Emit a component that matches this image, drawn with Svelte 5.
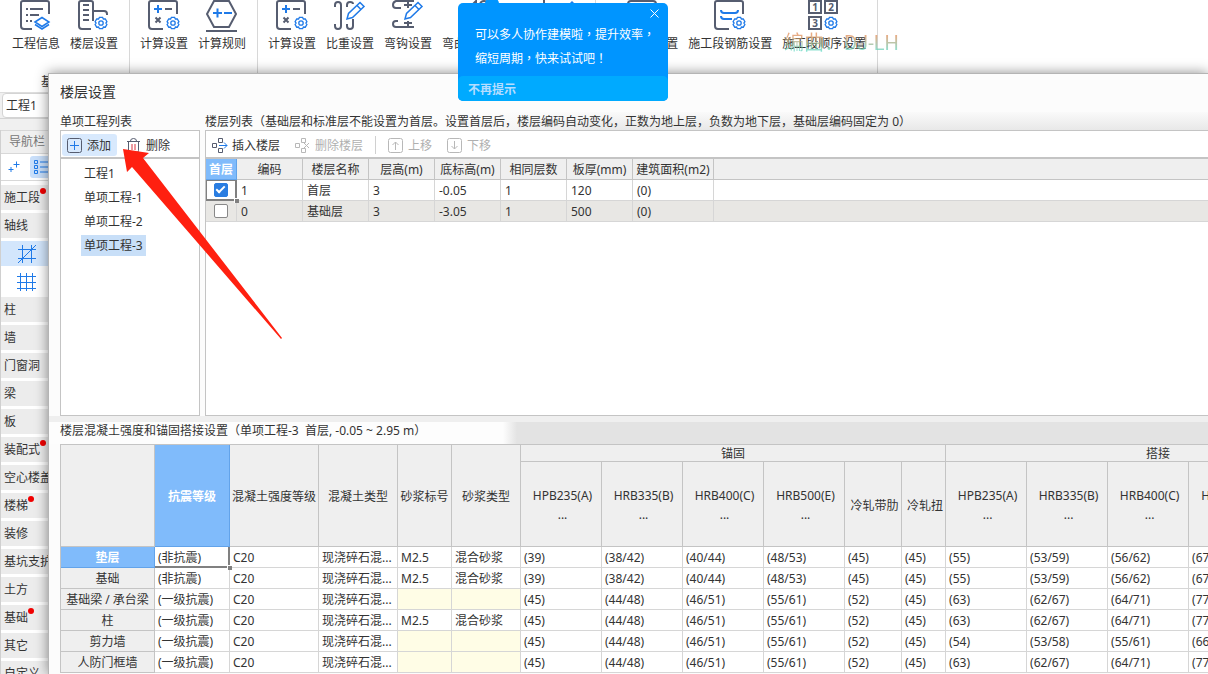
<script lang="ts">
  type Tool = { label: string; icon: string }

  const ribbon: { name: string; tools: Tool[] }[] = [
    {
      name: '基本设置',
      tools: [
        { label: '工程信息', icon: 'info' },
        { label: '楼层设置', icon: 'floor' },
      ],
    },
    {
      name: '土建设置',
      tools: [
        { label: '计算设置', icon: 'calc' },
        { label: '计算规则', icon: 'rule' },
      ],
    },
    {
      name: '钢筋设置',
      tools: [
        { label: '计算设置', icon: 'calc' },
        { label: '比重设置', icon: 'weight' },
        { label: '弯钩设置', icon: 'hook' },
        { label: '弯曲调整设置', icon: 'bend' },
        { label: '损耗率设置', icon: 'loss' },
      ],
    },
    {
      name: '施工段设置',
      tools: [
        { label: '施工单元设置', icon: 'stage' },
        { label: '施工段钢筋设置', icon: 'rebar' },
        { label: '施工段顺序设置', icon: 'order' },
      ],
    },
  ]

  const navTop = [
    { label: '施工段', dot: true },
    { label: '轴线', dot: false },
  ]

  const navRest = [
    { label: '柱', dot: false },
    { label: '墙', dot: false },
    { label: '门窗洞', dot: false },
    { label: '梁', dot: false },
    { label: '板', dot: false },
    { label: '装配式', dot: true },
    { label: '空心楼盖', dot: false },
    { label: '楼梯', dot: true },
    { label: '装修', dot: false },
    { label: '基坑支护', dot: false },
    { label: '土方', dot: false },
    { label: '基础', dot: true },
    { label: '其它', dot: false },
    { label: '自定义', dot: false },
  ]

  const projects = ['工程1', '单项工程-1', '单项工程-2', '单项工程-3']
  let selected = $state('单项工程-3')

  const floorHead = ['编码', '楼层名称', '层高(m)', '底标高(m)', '相同层数', '板厚(mm)', '建筑面积(m2)']
  let floors = $state([
    { first: true, cells: ['1', '首层', '3', '-0.05', '1', '120', '(0)'] },
    { first: false, cells: ['0', '基础层', '3', '-3.05', '1', '500', '(0)'] },
  ])

  const bars = ['HPB235(A)', 'HRB335(B)', 'HRB400(C)', 'HRB500(E)']
  const fixedHead = ['混凝土强度等级', '混凝土类型', '砂浆标号', '砂浆类型']
  const concrete = '现浇碎石混...'

  const strength = [
    { name: '垫层', seismic: '(非抗震)', mortar: true, values: ['(39)', '(38/42)', '(40/44)', '(48/53)', '(45)', '(45)', '(55)', '(53/59)', '(56/62)', '(67/74)', '(63)', '(63)'] },
    { name: '基础', seismic: '(非抗震)', mortar: true, values: ['(39)', '(38/42)', '(40/44)', '(48/53)', '(45)', '(45)', '(55)', '(53/59)', '(56/62)', '(67/74)', '(63)', '(63)'] },
    { name: '基础梁 / 承台梁', seismic: '(一级抗震)', mortar: false, values: ['(45)', '(44/48)', '(46/51)', '(55/61)', '(52)', '(45)', '(63)', '(62/67)', '(64/71)', '(77/85)', '(73)', '(63)'] },
    { name: '柱', seismic: '(一级抗震)', mortar: true, values: ['(45)', '(44/48)', '(46/51)', '(55/61)', '(52)', '(45)', '(63)', '(62/67)', '(64/71)', '(77/85)', '(73)', '(63)'] },
    { name: '剪力墙', seismic: '(一级抗震)', mortar: false, values: ['(45)', '(44/48)', '(46/51)', '(55/61)', '(52)', '(45)', '(54)', '(53/58)', '(55/61)', '(66/73)', '(62)', '(54)'] },
    { name: '人防门框墙', seismic: '(一级抗震)', mortar: false, values: ['(45)', '(44/48)', '(46/51)', '(55/61)', '(52)', '(45)', '(63)', '(62/67)', '(64/71)', '(77/85)', '(73)', '(63)'] },
  ]

  let showTip = $state(true)
</script>

{#snippet gear(x: number, y: number)}
  <g class="blue gear" transform="translate({x} {y})">
    <path d="M-1.6-5.600h3.200l.8 1.600 1.900-.1 1.600 2.700-1 1.400 1 1.500-1.600 2.700-1.900-.2-.8 1.700h-3.200l-.8-1.700-1.900.2-1.600-2.700 1-1.500-1-1.400 1.600-2.700 1.900.1z" />
    <circle r="2.200" />
  </g>
{/snippet}

{#snippet pencil()}
  <path class="blue thick" d="M13 19l1.500-5.500L26 2.500l4 4L18.500 17.500zM23 5.500l4 4" />
{/snippet}

{#snippet toolIcon(name: string)}
  <svg class="tool-icon" viewBox="0 0 32 32" aria-hidden="true">
    {#if name === 'info'}
      <path d="M12 29H4q-3 0-3-3V3q0-2 2-2h24q2 0 2 2v11M6 9h2M10 9h13M6 15h2M10 15h9M6 21h2M10 21h2" />
      <path class="blue thick" d="M15 22l7-4.500 7 4.500-7 4.500zM15 24.500l7 4.500 7-4.500" />
    {:else if name === 'floor'}
      <path d="M13 29H4q-3 0-3-3V3q0-2 2-2h10q2 0 2 2v18M15 11h11q3 0 3 3v1M5 5h6M5 10h6M5 15h6M5 20h6" />
      {@render gear(23, 23)}
    {:else if name === 'calc'}
      <path d="M15 29H4q-3 0-3-3V3q0-2 2-2h24q2 0 2 2v11M17 9h7M7.500 17.500l5 5M12.500 17.500l-5 5" />
      <path class="blue bold" d="M6 9h8M10 5v8" />
      {@render gear(25, 23)}
    {:else if name === 'rule'}
      <path d="M8 1h15l7 13-7 13H8L1 14zM0 31h31" />
      <path class="blue bold" d="M7 13h9M11.500 8.500v9M18 13h8" />
    {:else if name === 'weight'}
      <path d="M1 7V5q0-3 3-3t3 3v21q0 3-3 3t-3-3v-2M13 7V5q0-3 3-3t3 2M19 19v7q0 3-3 3t-3-3v-2" />
      {@render pencil()}
    {:else if name === 'hook'}
      <path d="M9 8H4Q1 8 1 5t3-4h18M16 1v7M12 5h8M6 21H4q-3 0-3 3t3 3h18M16 21v6M12 23h8" />
      {@render pencil()}
    {:else if name === 'bend'}
      <path d="M11 4l3-3v6M18 4q1-3 4-3t4 3" />
    {:else if name === 'loss'}
      <path d="M6 0v10M6 8H2" />
      <path class="blue thick" d="M30 6l4-4 3 3" />
    {:else if name === 'stage'}
      <rect x="2" y="1" width="28" height="28" rx="3" />
    {:else if name === 'rebar'}
      <path d="M15 29H4q-3 0-3-3V3q0-2 2-2h24q2 0 2 2v11" />
      <path class="blue bold" d="M7 10q0 3 3 3h11q3 0 3-3M7 16q0 3 3 3h8" />
      {@render gear(25, 23)}
    {:else}
      <path d="M1 1h12v12H1zM17 1h12v12H17zM1 17h12v12H1z" />
      <text x="7" y="11">1</text>
      <text x="23" y="11">2</text>
      <text x="7" y="27">3</text>
      {@render gear(23, 23)}
    {/if}
  </svg>
{/snippet}

{#snippet navItem(item: { label: string; dot: boolean })}
  <button class="nav-item"><span class:dot={item.dot}>{item.label}</span></button>
{/snippet}

<div class="app">
  <header class="ribbon">
    {#each ribbon as group}
      <section class="group">
        <div class="tools">
          {#each group.tools as tool}
            <button class="tool">
              {@render toolIcon(tool.icon)}
              <span>{tool.label}</span>
            </button>
          {/each}
        </div>
        <div class="group-name">{group.name}</div>
      </section>
    {/each}
  </header>

  <div class="doc-tabs"><button class="doc-tab">工程1</button></div>

  <aside class="sidebar">
    <div class="nav-title">导航栏</div>
    <div class="nav-tools">
      <button aria-label="展开">
        <svg class="nav-plus" viewBox="0 0 12 12"><path class="blue" d="M5.500 3.500h6M8.500.5v6M.5 8.500h5M3 6v5" /></svg>
      </button>
      <button class="active" aria-label="列表">
        <svg class="nav-list" viewBox="0 0 18 16">
          <path class="blue" d="M.5 1.500h3v3h-3zM.5 6.500h3v3h-3zM.5 11.500h3v3h-3zM6 3h12M6 8h12M6 13h12" />
        </svg>
      </button>
    </div>
    <nav>
      {#each navTop as item}{@render navItem(item)}{/each}
      <div class="nav-sub">
        <button class="active" aria-label="轴网">
          <svg viewBox="0 0 20 20"><path class="blue" d="M1 5.500h18M1 14.500h18M5.500 1v18M14.500 1v18M1 19L19 1" /></svg>
        </button>
        <button aria-label="辅助轴线">
          <svg viewBox="0 0 20 20"><path class="blue" d="M0 4.500h19M0 10.500h19M0 16.500h19M3.500 1v18M9.500 1v18M15.500 1v18" /></svg>
        </button>
      </div>
      {#each navRest as item}{@render navItem(item)}{/each}
    </nav>
  </aside>

  <div class="dialog" role="dialog" aria-labelledby="dialog-title">
    <h1 id="dialog-title">楼层设置</h1>

    <div class="panes">
      <h2>单项工程列表</h2>
      <h2 class="shaded">楼层列表（基础层和标准层不能设置为首层。设置首层后，楼层编码自动变化，正数为地上层，负数为地下层，基础层编码固定为 0）</h2>

      <section class="pane">
        <div class="toolbar">
          <button class="active">
            <svg viewBox="0 0 16 16"><rect x=".5" y=".5" width="14" height="14" rx="2" /><path class="blue" d="M3 7.500h9M7.500 3v9" /></svg>
            添加
          </button>
          <button>
            <svg viewBox="0 0 16 16"><path d="M1 3.500h13M2.500 3.500v9q0 2 2 2h6q2 0 2-2v-9M4.500 3q0-2.500 3-2.500t3 2.500" /><path class="red" d="M6 6v6M9 6v6" /></svg>
            删除
          </button>
        </div>
        <ul>
          {#each projects as project}
            <li>
              <button class:selected={project === selected} onclick={() => (selected = project)}>{project}</button>
            </li>
          {/each}
        </ul>
      </section>

      <section class="pane open">
        <div class="toolbar">
          <button>
            <svg viewBox="0 0 16 16"><path d="M6.500.5h4v4h-4zM.5 5.500h4v4h-4zM6.500 10.500h4v4h-4z" /><path class="blue" d="M7 7.500h8M12 4.500l3 3-3 3" /></svg>
            插入楼层
          </button>
          <button disabled>
            <svg viewBox="0 0 16 16"><path d="M6.500.5h4v4h-4zM.5 5.500h4v4h-4zM6.500 10.500h4v4h-4zM9 5l5 5M14 5l-5 5" /></svg>
            删除楼层
          </button>
          <span class="divider"></span>
          <button disabled>
            <svg viewBox="0 0 16 16"><rect x=".5" y=".5" width="14" height="14" rx="2" /><path d="M7.500 12V4M4.500 7l3-3 3 3" /></svg>
            上移
          </button>
          <button disabled>
            <svg viewBox="0 0 16 16"><rect x=".5" y=".5" width="14" height="14" rx="2" /><path d="M7.500 3v8M4.500 8l3 3 3-3" /></svg>
            下移
          </button>
        </div>
        <table class="floors">
          <colgroup>
            <col class="w31" />
            {#each { length: 6 } as _}<col class="w66" />{/each}
            <col class="w81" />
            <col />
          </colgroup>
          <thead>
            <tr>
              <th class="picked">首层</th>
              {#each floorHead as head}<th>{head}</th>{/each}
              <th></th>
            </tr>
          </thead>
          <tbody>
            {#each floors as floor, i}
              <tr>
                <td class="check" class:cursor={i === 0}>
                  <input type="checkbox" aria-label="首层 {floor.cells[1]}" bind:checked={floor.first} />
                </td>
                {#each floor.cells as cell}<td>{cell}</td>{/each}
                <td></td>
              </tr>
            {/each}
          </tbody>
        </table>
      </section>
    </div>

    <h2 class="strength-title">楼层混凝土强度和锚固搭接设置（单项工程-3&nbsp; 首层, -0.05 ~ 2.95 m）</h2>

    <table class="strength">
      <colgroup>
        <col class="w94" />
        <col class="w75" />
        <col class="w89" />
        <col class="w79" />
        <col class="w54" />
        <col class="w69" />
        {#each { length: 2 } as _}
          {#each bars as _bar}<col class="w81" />{/each}
          <col class="w57" />
          <col class="w44" />
        {/each}
      </colgroup>
      <thead>
        <tr class="group-row">
          <th rowspan="2"></th>
          <th rowspan="2" class="picked">抗震等级</th>
          {#each fixedHead as head}<th rowspan="2">{head}</th>{/each}
          <th colspan="6">锚固</th>
          <th colspan="6">搭接</th>
        </tr>
        <tr class="bar-row">
          {#each { length: 2 } as _}
            {#each bars as bar}<th>{bar}<br />...</th>{/each}
            <th>冷轧带肋</th>
            <th>冷轧扭</th>
          {/each}
        </tr>
      </thead>
      <tbody>
        {#each strength as row, i}
          <tr>
            <th class:picked={i === 0}>{row.name}</th>
            <td class:cursor={i === 0}>{row.seismic}</td>
            <td>C20</td>
            <td>{concrete}</td>
            <td class:unused={!row.mortar}>{row.mortar ? 'M2.5' : ''}</td>
            <td class:unused={!row.mortar}>{row.mortar ? '混合砂浆' : ''}</td>
            {#each row.values as value}<td>{value}</td>{/each}
          </tr>
        {/each}
      </tbody>
    </table>
  </div>

  <div class="watermark">编曲：DJ-LH</div>

  {#if showTip}
    <div class="tip">
      <button class="tip-close" aria-label="关闭" onclick={() => (showTip = false)}>
        <svg viewBox="0 0 9 9"><path d="M.5.5l8 8M8.500.5l-8 8" /></svg>
      </button>
      <p>可以多人协作建模啦，提升效率，<br />缩短周期，快来试试吧！</p>
      <button class="tip-never" onclick={() => (showTip = false)}>不再提示</button>
    </div>
  {/if}

  <svg class="arrow" viewBox="0 0 160 192" aria-hidden="true">
    <path d="M0 0L26 4 20 9 159 189 158 190 9 18 4 23z" />
  </svg>
</div>

<style>
  :global(body) {
    background: #fff;
  }

  .app {
    position: relative;
    height: 100vh;
    overflow: hidden;
    font: 12px/18px 'Noto Sans', 'Noto Sans CJK SC', sans-serif;
    color: #333;
    background: #f0f0f0;
  }

  button {
    margin: 0;
    padding: 0;
    border: none;
    background: none;
    font: inherit;
    color: inherit;
    white-space: nowrap;
  }

  h1,
  h2,
  p,
  ul {
    margin: 0;
    padding: 0;
    font-weight: normal;
    list-style: none;
  }

  svg {
    display: block;
    fill: none;
    stroke: #565d70;
  }

  .blue {
    stroke: #1f7ae8;
    stroke-width: 1;
  }

  .gear {
    stroke-width: 1.3;
  }

  .thick {
    stroke-width: 1.5;
  }

  .bold {
    stroke-width: 2;
  }

  .red {
    stroke: #d9303c;
  }

  /* ribbon */
  .ribbon {
    display: flex;
    padding-left: 2px;
    height: 92px;
    background: #fff;
    border-bottom: 1px solid #ddd;
  }

  .group {
    padding: 0 6px 0 5px;
    border-right: 1px solid #d8d8d8;
  }

  .tools {
    display: flex;
  }

  .tool {
    display: flex;
    flex-direction: column;
    align-items: center;
    gap: 3px;
    padding: 0 5px;
  }

  .tool-icon {
    width: 32px;
    height: 32px;
    stroke-width: 2;
    overflow: visible;
  }

  .tool-icon text {
    font-size: 10px;
    font-weight: bold;
    text-anchor: middle;
    fill: #565d70;
    stroke: none;
  }

  .group-name {
    margin-top: 20px;
    text-align: center;
  }

  .doc-tabs {
    display: flex;
    padding: 0 2px;
    height: 25px;
    border-bottom: 1px solid #d4d4d4;
  }

  .doc-tab {
    width: 90px;
    padding-left: 3px;
    text-align: left;
    background: #fff;
    border: 1px solid #d4d4d4;
    border-radius: 4px;
  }

  /* navigation */
  .sidebar {
    width: 120px;
    margin-top: 11px;
    border-left: 1px solid #d0d0d0;
    background: #fff;
  }

  .nav-title {
    padding: 2px 8px;
    color: #777;
    background: #f0f0f0;
    border-top: 1px solid #d8d8d8;
    border-bottom: 1px solid #d8d8d8;
  }

  .nav-tools {
    display: flex;
    gap: 10px;
    padding: 2px 0 2px 7px;
    border-bottom: 1px solid #d8d8d8;
  }

  .nav-tools button {
    display: flex;
    align-items: center;
    height: 22px;
  }

  .nav-tools .active {
    padding: 0 4px;
    background: #c9dffa;
    border-radius: 3px;
  }

  .nav-plus {
    width: 12px;
    height: 12px;
  }

  .nav-list {
    width: 18px;
    height: 16px;
  }

  nav {
    display: flex;
    flex-direction: column;
    gap: 3px;
    padding-top: 4px;
  }

  .nav-item {
    height: 25px;
    padding-left: 3px;
    text-align: left;
    background: #ececec;
  }

  .dot {
    position: relative;
  }

  .dot::after {
    content: '';
    position: absolute;
    top: -1px;
    right: -6px;
    width: 6px;
    height: 6px;
    border-radius: 50%;
    background: #f00000;
  }

  .nav-sub {
    display: flex;
    flex-direction: column;
    gap: 3px;
  }

  .nav-sub button {
    height: 25px;
    padding: 0 16px;
  }

  .nav-sub .active {
    background: #d3e6fc;
  }

  .nav-sub svg {
    width: 20px;
    height: 20px;
  }

  /* dialog */
  .dialog {
    position: absolute;
    top: 73px;
    left: 48px;
    right: 0;
    bottom: 0;
    padding: 0 0 0 11px;
    overflow: hidden;
    background: #fcfcfc;
    border: 1px solid #b4b4b4;
    border-width: 1px 0 0 1px;
    box-shadow: 0 0 12px rgba(0, 0, 0, 0.45);
  }

  h1 {
    padding: 8px 0 10px;
    font-size: 14px;
    line-height: 20px;
  }

  h2 {
    padding-top: 2px;
    font-size: 12px;
    line-height: 16px;
    white-space: nowrap;
    overflow: hidden;
  }

  .panes {
    display: grid;
    grid-template-columns: 140px minmax(0, 1fr);
    column-gap: 5px;
    background: #fcfcfc;
  }

  .shaded {
    background:
      linear-gradient(to right, #fcfcfc 250px, transparent 400px),
      linear-gradient(#fafafa, #e8e8e8);
  }

  .pane {
    height: 284px;
    background: #fff;
    border: 1px solid #c4c4c4;
  }

  .open {
    border-right: none;
  }

  .toolbar {
    display: flex;
    align-items: center;
    gap: 4px;
    height: 24px;
    padding: 2px 0 0 1px;
    border-bottom: 2px solid #c4c4c4;
  }

  .toolbar button {
    display: flex;
    align-items: center;
    gap: 4px;
    height: 22px;
    padding: 1px 6px 0 5px;
    border-radius: 3px;
  }

  .toolbar .active {
    background: #d8e9fd;
  }

  .toolbar svg {
    width: 16px;
    height: 16px;
  }

  .toolbar button:disabled {
    color: #b0b0b0;
  }

  .toolbar button:disabled svg {
    stroke: #b8b8b8;
  }

  .divider {
    width: 1px;
    height: 18px;
    margin: 0 3px 0 2px;
    background: #d0d0d0;
  }

  ul {
    padding: 4px 0 0 20px;
  }

  li {
    height: 24px;
  }

  li button {
    height: 21px;
    padding: 0 3px;
  }

  .selected {
    background: #c8dff8;
  }

  table {
    table-layout: fixed;
    border-collapse: separate;
    border-spacing: 0;
  }

  th,
  td {
    height: 18px;
    padding: 2px 0 0;
    line-height: 18px;
    white-space: nowrap;
    border: 1px solid #d6d6d6;
    border-width: 0 1px 1px 0;
  }

  th {
    font-weight: normal;
    background: #efefef;
    border-color: #c4c4c4;
  }

  td {
    padding-left: 4px;
    background: #fff;
  }

  .picked {
    color: #fff;
    font-weight: bold;
    background: #80bbfb;
    border-color: #62a3ea;
  }

  .cursor {
    position: relative;
    box-shadow: inset -1px -1px #808080;
    border-color: #808080;
  }

  .cursor::after {
    content: '';
    position: absolute;
    right: -3px;
    bottom: -3px;
    width: 4px;
    height: 4px;
    background: #808080;
    border: 1px solid #fff;
    border-width: 1px 0 0 1px;
  }

  .floors {
    width: 100%;
  }

  .floors th:last-child,
  .floors td:last-child {
    border-right: none;
  }

  .floors tr:nth-child(2) td {
    background: #e8e7e4;
  }

  .check {
    padding: 1px 0;
    text-align: center;
  }

  .check.cursor {
    box-shadow:
      inset -1px -1px #808080,
      inset 1px 1px #808080;
  }

  .check input {
    appearance: none;
    display: block;
    width: 14px;
    height: 14px;
    margin: 0 auto;
    background: #fff;
    border: 1px solid #888;
    border-radius: 2px;
  }

  .check input:checked {
    background: #2a7de1;
    border-color: #2a7de1;
  }

  .check input:checked::after {
    content: '';
    display: block;
    width: 7px;
    height: 3px;
    margin: 2px 0 0 1px;
    border: 2px solid #fff;
    border-width: 0 0 2px 2px;
    transform: rotate(-45deg);
  }

  .strength-title {
    padding: 1px 0 5px 11px;
    margin-left: -11px;
    border-top: 6px solid #efefef;
    background: linear-gradient(to right, #fdfdfd 454px, #e3e3e3 468px);
  }

  .strength {
    width: 1311px;
    border-top: 1px solid #c4c4c4;
    border-left: 1px solid #c4c4c4;
  }

  .group-row th {
    height: 14px;
    line-height: 14px;
  }

  .bar-row th {
    height: 82px;
    line-height: 19px;
  }

  .bar-row th,
  .strength td {
    padding-left: 3px;
  }

  .unused {
    background: #fffde6;
  }

  .w31 { width: 31px; }
  .w44 { width: 44px; }
  .w54 { width: 54px; }
  .w57 { width: 57px; }
  .w66 { width: 66px; }
  .w69 { width: 69px; }
  .w75 { width: 75px; }
  .w79 { width: 79px; }
  .w81 { width: 81px; }
  .w89 { width: 89px; }
  .w94 { width: 94px; }

  /* overlays */
  .watermark {
    position: absolute;
    top: 30px;
    left: 784px;
    font-family: Roboto, 'Noto Sans CJK SC', sans-serif;
    font-size: 20px;
    line-height: 26px;
    color: transparent;
    background: linear-gradient(#e08850 20%, #50dcc8 85%);
    background-clip: text;
    opacity: 0.7;
  }

  .tip {
    position: absolute;
    top: 3px;
    left: 458px;
    width: 210px;
    font-family: 'Noto Sans CJK TC', 'Noto Sans CJK SC', sans-serif;
    color: #fff;
    background: #0095ff;
    border-radius: 5px;
  }

  .tip::before {
    content: '';
    position: absolute;
    top: -6px;
    left: 27px;
    width: 14px;
    height: 14px;
    border-radius: 50%;
    background: #0095ff;
  }

  .tip p {
    padding: 19px 0 6px 17px;
    line-height: 24px;
    white-space: nowrap;
  }

  .tip-close {
    position: absolute;
    top: 6px;
    right: 9px;
  }

  .tip-close svg {
    width: 9px;
    height: 9px;
    stroke: #fff;
  }

  .tip-never {
    display: block;
    width: 100%;
    height: 25px;
    padding-left: 10px;
    text-align: left;
    font-weight: bold;
    color: #b5ddff;
    background: #00aaff;
    border-radius: 5px;
  }

  .arrow {
    position: absolute;
    top: 149px;
    left: 123px;
    width: 160px;
    height: 192px;
    fill: #ff2010;
    stroke: none;
    pointer-events: none;
  }
</style>
